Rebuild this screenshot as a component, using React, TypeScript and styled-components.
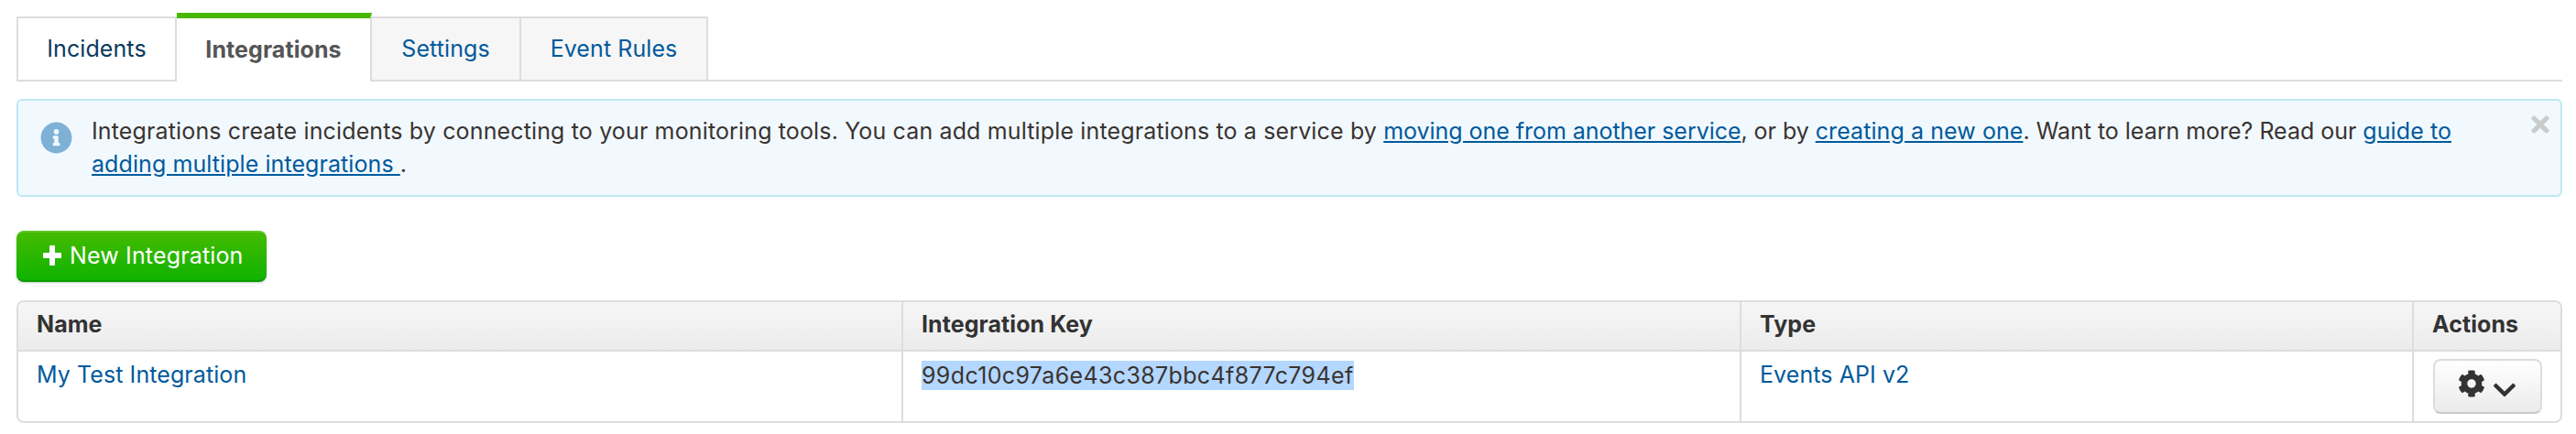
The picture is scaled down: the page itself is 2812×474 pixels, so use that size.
import React from "react";
import styled, { createGlobalStyle } from "styled-components";
import { FaCog, FaChevronDown, FaInfoCircle, FaTimes } from "react-icons/fa";

const Global = createGlobalStyle`
  html, body { margin: 0; padding: 0; background: #fff; }
  body { font-family: "Inter", "Liberation Sans", sans-serif; font-size: 25px; letter-spacing: 0.08px; color: #333; }
  a { color: #005a9c; text-decoration: none; }
`;

const Page = styled.div`
  padding: 14px 15px 0 18px;
  width: 2812px;
  height: 474px;
  box-sizing: border-box;
  overflow: hidden;
`;

const TabBar = styled.nav`
  display: flex;
  align-items: flex-end;
  height: 73px;
  border-bottom: 2px solid #ddd;
`;

const Tab = styled.a<{ $state: "plain" | "active" | "muted"; $width: number }>`
  box-sizing: border-box;
  display: flex;
  align-items: center;
  justify-content: center;
  margin-bottom: -2px;
  height: ${(p) => (p.$state === "active" ? "75px" : "71px")};
  width: ${(p) => p.$width}px;
  font-weight: ${(p) => (p.$state === "active" ? 700 : 400)};
  color: ${(p) => (p.$state === "active" ? "#555" : p.$state === "plain" ? "#0a3a5c" : "#005a9c")};
  background: ${(p) => (p.$state === "muted" ? "#f6f6f6" : "#fff")};
  border: solid #ddd;
  border-width: ${(p) => (p.$state === "active" ? "6px 2px 0 0" : "2px 2px 2px 0")};
  border-top-color: ${(p) => (p.$state === "active" ? "#48b800" : "#ddd")};
  padding-bottom: 2px;
  &:first-child { border-left-width: 2px; }
`;

const Alert = styled.div`
  position: relative;
  box-sizing: border-box;
  display: flex;
  margin-top: 19px;
  height: 107px;
  padding: 15px 90px 0 24px;
  gap: 21px;
  background: #f1f9ff;
  border: 2px solid #bfe8f3;
  border-radius: 6px;
`;

const InfoIcon = styled(FaInfoCircle)`
  flex: none;
  width: 35px;
  height: 35px;
  margin-top: 8px;
  color: #7fb0d6;
`;

const AlertText = styled.p`
  margin: 0;
  line-height: 36px;
  letter-spacing: 0.14px;
  color: #3a3330;
`;

const TextRun = styled.span<{ $spacing: number }>`
  letter-spacing: ${(p) => p.$spacing}px;
`;

const Link = styled.a<{ $spacing: number }>`
  letter-spacing: ${(p) => p.$spacing}px;
  text-decoration: underline;
`;

const Close = styled(FaTimes)`
  position: absolute;
  top: 12px;
  right: 12px;
  width: 20px;
  height: 28px;
  color: #c8cccc;
`;

const NewButton = styled.button`
  box-sizing: border-box;
  display: flex;
  align-items: center;
  gap: 9px;
  margin-top: 37px;
  width: 273px;
  height: 56px;
  padding: 0 0 2px 29px;
  font: inherit;
  letter-spacing: 0.15px;
  color: #fff;
  background: linear-gradient(#44bb00, #0fb300);
  border: 0;
  border-top: 2px solid #5cc626;
  border-bottom: 2px solid #0e9a00;
  border-radius: 8px;
  box-shadow: 0 1px 3px rgba(0, 0, 0, 0.2);
`;

const PlusIcon = styled.svg`
  flex: none;
  width: 20px;
  height: 22px;
  fill: #fff;
`;

const Table = styled.div`
  box-sizing: border-box;
  margin-top: 20px;
  height: 134px;
  display: grid;
  grid-template-columns: 966px 915px 734px 1fr;
  grid-template-rows: 54px 1fr;
  border: 2px solid #ddd;
  border-radius: 8px;
  overflow: hidden;
`;

const HeadCell = styled.div`
  padding: 9px 20px 0 20px;
  font-weight: 700;
  background: linear-gradient(#f6f6f6, #ececec);
  border-bottom: 2px solid #ddd;
  border-right: 2px solid #ddd;
  color: #333;
  &:nth-child(4) { border-right: 0; }
`;

const Cell = styled.div`
  padding: 10px 20px 0 20px;
  border-right: 2px solid #ddd;
  &:last-child { border-right: 0; }
`;

const ActionCell = styled(Cell)`
  padding: 8px 0 0 21px;
`;

const Selected = styled.span`
  display: inline-block;
  height: 32px;
  line-height: 32px;
  letter-spacing: 0.36px;
  background: #b3d7ff;
  color: #3a3330;
`;

const ActionButton = styled.button`
  box-sizing: border-box;
  display: flex;
  align-items: center;
  justify-content: center;
  gap: 7px;
  width: 119px;
  height: 60px;
  padding: 0;
  background: linear-gradient(#fff, #ebebeb);
  border: 2px solid #ddd;
  border-bottom-color: #c8c8c8;
  border-radius: 8px;
  color: #333;
`;

const GearIcon = styled(FaCog)`
  width: 30px;
  height: 30px;
  margin-bottom: 6px;
`;

const CaretIcon = styled(FaChevronDown)`
  width: 28px;
  height: 28px;
  margin-top: 7px;
`;

export default function App() {
  return (
    <Page>
      <Global />
      <TabBar>
        <Tab $state="plain" $width={175}>Incidents</Tab>
        <Tab $state="active" $width={213}>Integrations</Tab>
        <Tab $state="muted" $width={163}>Settings</Tab>
        <Tab $state="muted" $width={204}>Event Rules</Tab>
      </TabBar>
      <Alert>
        <InfoIcon />
        <AlertText>
          Integrations create incidents by connecting to your monitoring tools. You can add multiple integrations to a service by{" "}
          <Link $spacing={-0.04}>moving one from another service</Link>
          <TextRun $spacing={-0.04}>, or by </TextRun>
          <Link $spacing={0.08}>creating a new one</Link>
          <TextRun $spacing={-0.02}>. Want to learn more? Read our </TextRun>
          <Link $spacing={0.08}>guide to adding multiple integrations </Link>.
        </AlertText>
        <Close />
      </Alert>
      <NewButton>
        <PlusIcon viewBox="0 0 20 22">
          <path d="M7 1a1 1 0 0 1 1-1h4a1 1 0 0 1 1 1v7h6a1 1 0 0 1 1 1v4a1 1 0 0 1-1 1h-6v7a1 1 0 0 1-1 1H8a1 1 0 0 1-1-1v-7H1a1 1 0 0 1-1-1V9a1 1 0 0 1 1-1h6z" />
        </PlusIcon>
        New Integration
      </NewButton>
      <Table>
        <HeadCell>Name</HeadCell>
        <HeadCell>Integration Key</HeadCell>
        <HeadCell>Type</HeadCell>
        <HeadCell>Actions</HeadCell>
        <Cell><a>My Test Integration</a></Cell>
        <Cell><Selected>99dc10c97a6e43c387bbc4f877c794ef</Selected></Cell>
        <Cell><a>Events API v2</a></Cell>
        <ActionCell>
          <ActionButton>
            <GearIcon />
            <CaretIcon />
          </ActionButton>
        </ActionCell>
      </Table>
    </Page>
  );
}
